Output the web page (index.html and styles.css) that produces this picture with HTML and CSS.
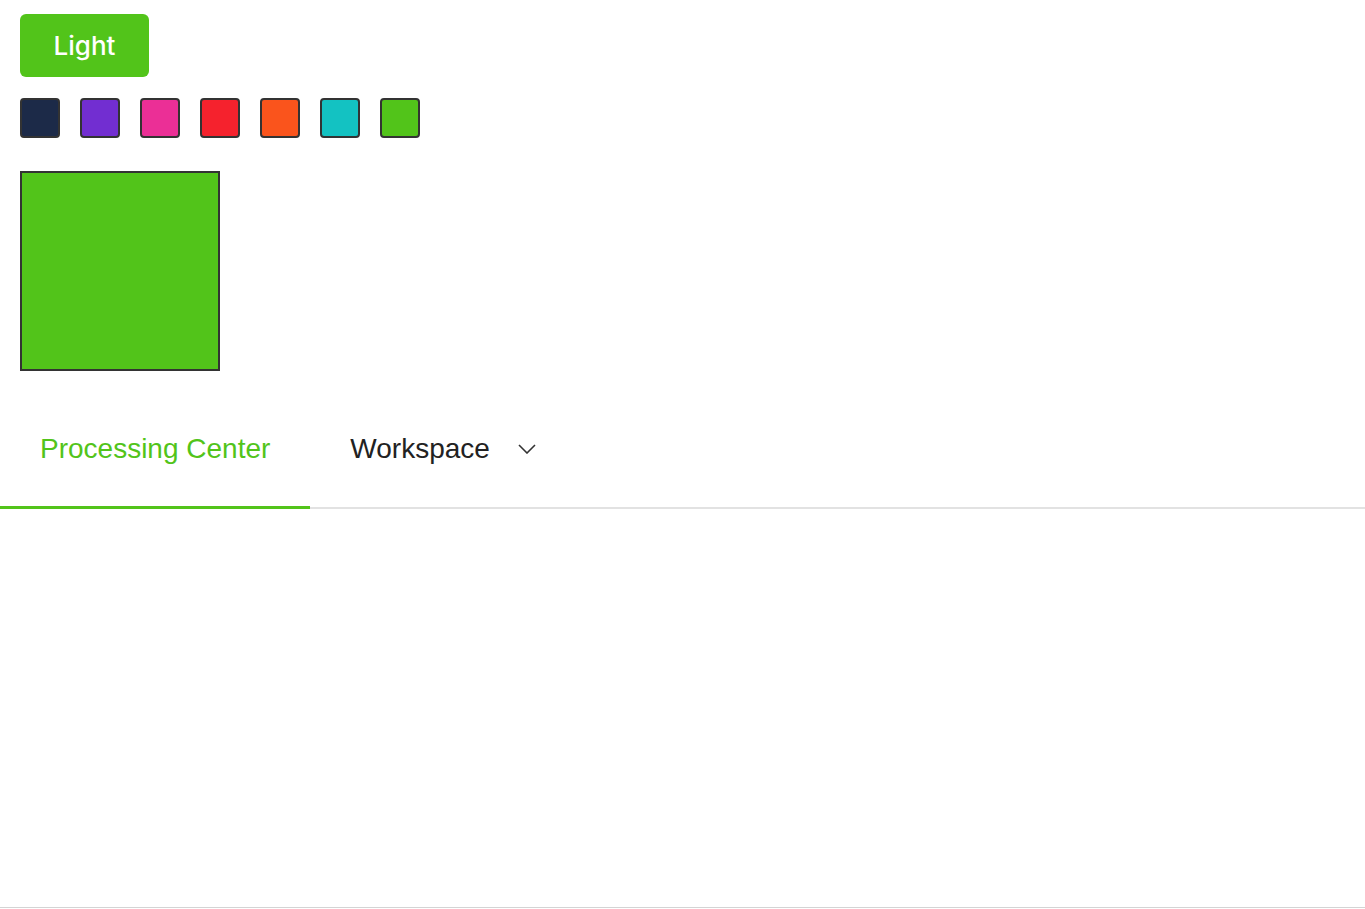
FILE: index.html
```html
<!DOCTYPE html>
<html>
<head>
    <meta charset="UTF-8">
    <title>Theme Picker</title>
    <link rel="stylesheet" href="styles.css">
</head>
<body>
    <div class="page">
        <div class="controls">
            <button class="theme-button">Light</button>

            <div class="swatches">
                <span class="swatch navy"></span>
                <span class="swatch purple"></span>
                <span class="swatch pink"></span>
                <span class="swatch red"></span>
                <span class="swatch orange"></span>
                <span class="swatch cyan"></span>
                <span class="swatch green"></span>
            </div>

            <div class="preview"></div>
        </div>

        <div class="tabs">
            <div class="tab active">Processing Center</div>
            <div class="tab">
                Workspace
                <svg class="chevron" width="18" height="10" viewBox="0 0 18 10">
                    <path d="M1 1 L9 9 L17 1" fill="none" stroke="#333" stroke-width="1.6"/>
                </svg>
            </div>
        </div>
    </div>
</body>
</html>
```

FILE: styles.css
```css
body {
    margin: 0;
    font-family: "Liberation Sans", Arial, sans-serif;
    background-color: #fff;
}
.page {
    min-height: 907px;
    border-bottom: 1px solid #d4d4d4;
    box-shadow: 0 1px 0 #808080;
}
.controls {
    padding: 14px 20px 0;
}
.theme-button {
    display: block;
    width: 129px;
    height: 63px;
    border: none;
    border-radius: 6px;
    background-color: #52c41a;
    color: #fff;
    font-family: Inter, "Liberation Sans", sans-serif;
    font-size: 26px;
    font-weight: 500;
    cursor: pointer;
}
.swatches {
    display: flex;
    gap: 20px;
    margin-top: 21px;
}
.swatch {
    width: 36px;
    height: 36px;
    border: 2px solid #333;
    border-radius: 4px;
}
.navy { background-color: #1c2a48; }
.purple { background-color: #722ed1; }
.pink { background-color: #eb2f96; }
.red { background-color: #f5222d; }
.orange { background-color: #fa541c; }
.cyan { background-color: #13c2c2; }
.green { background-color: #52c41a; }
.preview {
    width: 196px;
    height: 196px;
    margin-top: 33px;
    border: 2px solid #333;
    background-color: #52c41a;
}
.tabs {
    display: flex;
    margin-top: 20px;
    border-bottom: 2px solid #e2e2e2;
}
.tab {
    display: flex;
    align-items: center;
    height: 118px;
    padding: 0 40px;
    font-size: 28px;
    color: #222;
    box-sizing: border-box;
    border-bottom: 3px solid transparent;
    margin-bottom: -2px;
}
.tab.active {
    color: #52c41a;
    border-bottom-color: #52c41a;
}
.chevron {
    margin-left: 28px;
}
```
